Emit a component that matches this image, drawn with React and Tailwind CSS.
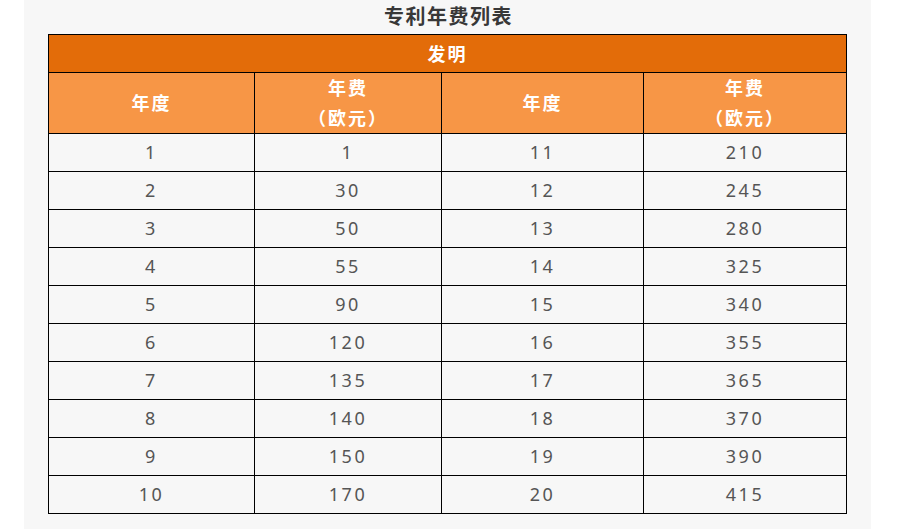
import React from 'react';

const rows = [
  [1, 1, 11, 210],
  [2, 30, 12, 245],
  [3, 50, 13, 280],
  [4, 55, 14, 325],
  [5, 90, 15, 340],
  [6, 120, 16, 355],
  [7, 135, 17, 365],
  [8, 140, 18, 370],
  [9, 150, 19, 390],
  [10, 170, 20, 415],
];

const font = { fontFamily: '"Noto Sans", "Noto Sans CJK SC", sans-serif' };

const HeadCell = ({ children, colSpan }) => (
  <th
    colSpan={colSpan}
    className="border border-black p-0 text-center align-middle text-[18px] font-bold leading-[30px] tracking-[2px] text-white"
  >
    {children}
  </th>
);

const App = () => {
  return (
    <div className="h-[530px] w-[900px] bg-white" style={font}>
      <div className="ml-[24px] h-[529px] w-[847px] bg-[#f7f7f7]">
        <div className="flex h-[34px] items-center justify-center pl-[2px] text-[20px] font-bold tracking-[1.5px] text-[#383838]">
          专利年费列表
        </div>
        <table className="ml-[24px] w-[798px] table-fixed border-collapse">
          <colgroup>
            <col className="w-[206px]" />
            <col className="w-[187px]" />
            <col className="w-[202px]" />
            <col className="w-[203px]" />
          </colgroup>
          <thead>
            <tr className="h-[38px] bg-[#e36c09]">
              <HeadCell colSpan={4}>发明</HeadCell>
            </tr>
            <tr className="h-[61px] bg-[#f79646]">
              <HeadCell>年度</HeadCell>
              <HeadCell>
                年费
                <br />
                （欧元）
              </HeadCell>
              <HeadCell>年度</HeadCell>
              <HeadCell>
                年费
                <br />
                （欧元）
              </HeadCell>
            </tr>
          </thead>
          <tbody>
            {rows.map((r) => (
              <tr key={r[0]} className="h-[38px]">
                {r.map((v, i) => (
                  <td
                    key={i}
                    className="border border-black p-0 pb-[2px] text-center align-middle text-[18px] leading-[30px] tracking-[2.5px] text-[#555]"
                  >
                    {v}
                  </td>
                ))}
              </tr>
            ))}
          </tbody>
        </table>
      </div>
    </div>
  );
};

export default App;
